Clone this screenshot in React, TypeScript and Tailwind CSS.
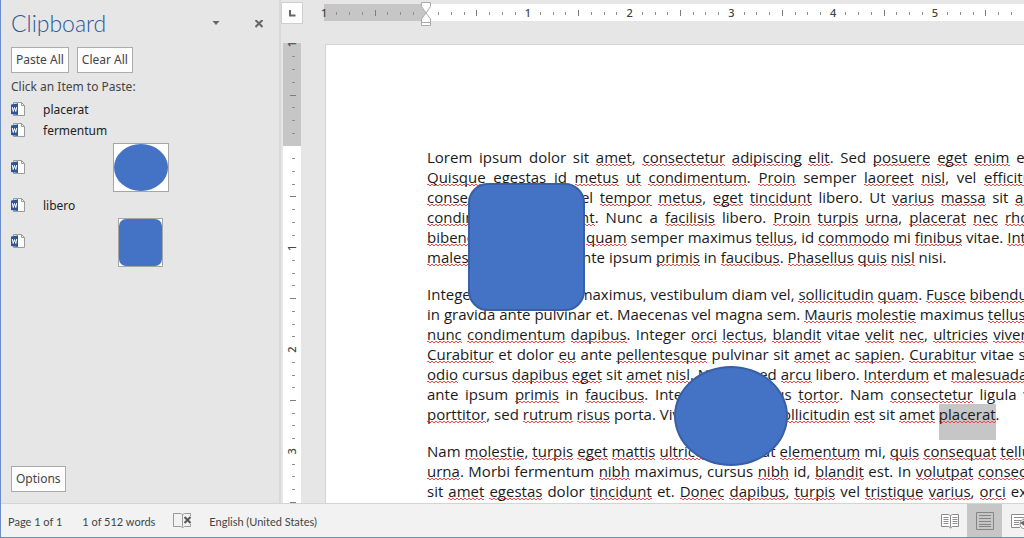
import { Fragment } from 'react';

type Line = { text: string; width?: string };

// words between underscores are flagged by the spell checker, * marks the selection
const paragraphs: Line[][] = [
  [
    { text: 'Lorem ipsum dolor sit _amet_, _consectetur_ _adipiscing_ _elit_. Sed _posuere_ _eget_ _enim_ et', width: 'w-[603px]' },
    { text: '_Quisque_ _egestas_ id _metus_ _ut_ _condimentum_. _Proin_ semper _laoreet_ _nisl_, vel _efficitur_', width: 'w-[611px]' },
    { text: '_consectetur_ nisl. Ut vel _tempor_ _metus_, _eget_ _tincidunt_ libero. Ut _varius_ _massa_ sit _amet_', width: 'w-[624px]' },
    { text: '_condimentum_ _tincidunt_. Nunc a _facilisis_ libero. _Proin_ _turpis_ _urna_, _placerat_ _nec_ _rhoncus_', width: 'w-[635px]' },
    { text: '_bibendum_. Aliquam et _quam_ semper maximus _tellus_, id _commodo_ mi _finibus_ vitae. _Interdum_', width: 'w-[642px]' },
    { text: '_malesuada_ fames ac ante ipsum _primis_ in _faucibus_. _Phasellus_ _quis_ _nisl_ nisi.' },
  ],
  [
    { text: 'Integer at ipsum quis maximus, vestibulum diam vel, _sollicitudin_ _quam_. _Fusce_ _bibendum_', width: 'w-[608px]' },
    { text: 'in gravida ante pulvinar et. Maecenas vel magna sem. _Mauris_ _molestie_ maximus _tellus_,', width: 'w-[592px]' },
    { text: '_nunc_ _condimentum_ _dapibus_. Integer _orci_ _lectus_, _blandit_ vitae _velit_ _nec_, _ultricies_ _viverra_', width: 'w-[614px]' },
    { text: '_Curabitur_ et dolor _eu_ ante _pellentesque_ pulvinar sit _amet_ ac _sapien_. _Curabitur_ vitae sem', width: 'w-[621px]' },
    { text: '_odio_ cursus _dapibus_ _eget_ sit _amet_ _nisl_. Nullam sed _arcu_ libero. _Interdum_ et _malesuada_', width: 'w-[596px]' },
    { text: 'ante ipsum _primis_ in _faucibus_. Integer non cursus _tortor_. Nam _consectetur_ ligula vel', width: 'w-[616px]' },
    { text: '_porttitor_, sed _rutrum_ _risus_ porta. Vivamus mauris _sollicitudin_ _est_ sit _amet_ *placerat*.' },
  ],
  [
    { text: 'Nam _molestie_, _turpis_ _eget_ _mattis_ _ultrices_, sed erat _elementum_ mi, _quis_ _consequat_ _tellus_', width: 'w-[611px]' },
    { text: '_urna_. Morbi fermentum _nibh_ maximus, cursus _nibh_ id, _blandit_ est. In _volutpat_ _consequat_', width: 'w-[624px]' },
    { text: 'sit _amet_ _egestas_ dolor _tincidunt_ et. _Donec_ _dapibus_, _turpis_ vel _tristique_ _varius_, _orci_ ex', width: 'w-[600px]' },
  ],
];

const squiggle =
  'bg-[linear-gradient(90deg,#f24a4a_50%,transparent_50%),linear-gradient(90deg,#f24a4a_50%,transparent_50%)] bg-[length:4px_1px] bg-[position:0px_17px,2px_18px] bg-repeat-x';

function TextLine({ text, width }: Line) {
  return (
    <span className={`block h-5 whitespace-nowrap ${width ? `${width} [text-align-last:justify]` : ''}`}>
      {text.split(/(_[^_]+_|\*[^*]+\*)/).map((part, i) => {
        if (part.startsWith('_')) {
          return <span key={i} className={squiggle}>{part.slice(1, -1)}</span>;
        }
        if (part.startsWith('*')) {
          return <span key={i} className={`bg-[#c6c6c6] pb-4 ${squiggle}`}>{part.slice(1, -1)}</span>;
        }
        return <Fragment key={i}>{part}</Fragment>;
      })}
    </span>
  );
}

const INCH = 101.8;

function HorizontalRuler() {
  const marks = Array.from({ length: 55 }, (_, i) => i - 8);
  return (
    <svg className="block h-7 w-full overflow-hidden" aria-hidden="true">
      <rect x="7" y="4" width="100%" height="17" fill="#fff" />
      <rect x="7" y="4" width="102" height="17" fill="#c6c6c6" />
      {marks.map((m) => {
        const x = 109 + (m * INCH) / 8;
        if (m === 0) return null;
        if (m % 8 === 0) {
          return (
            <text key={m} x={x} y="17" textAnchor="middle" className="fill-[#444] font-['Noto_Sans',sans-serif] text-[11px] font-medium">
              {Math.abs(m / 8)}
            </text>
          );
        }
        const half = m % 4 === 0;
        return <rect key={m} x={Math.floor(x)} y={half ? 10 : 12} width="1" height={half ? 6 : 3} fill={half ? '#7d7d7d' : '#8f8f8f'} />;
      })}
      <path d="M104.500 2.500h9v4l-4.500 6.500 4.500 6v6.500h-9v-6.500l4.500-6-4.500-6.500z" fill="#fff" stroke="#ababab" />
      <path d="M104.500 22.500h9" stroke="#ababab" />
    </svg>
  );
}

function VerticalRuler() {
  const marks = Array.from({ length: 37 }, (_, i) => i - 8);
  return (
    <svg className="block min-h-0 w-[18px] flex-1 overflow-hidden" aria-hidden="true">
      <rect y="3" width="18" height="100%" fill="#fff" />
      <rect y="3" width="18" height="103" fill="#c6c6c6" />
      {marks.map((m) => {
        const y = 106 + (m * INCH) / 8;
        if (m === 0) return null;
        if (m % 8 === 0) {
          return (
            <text key={m} transform={`translate(13 ${y}) rotate(-90)`} textAnchor="middle" className="fill-[#444] font-['Noto_Sans',sans-serif] text-[11px] font-medium">
              {Math.abs(m / 8)}
            </text>
          );
        }
        const half = m % 4 === 0;
        return <rect key={m} x={half ? 7 : 9} y={Math.floor(y)} width={half ? 6 : 3} height="1" fill={half ? '#7d7d7d' : '#8f8f8f'} />;
      })}
    </svg>
  );
}

function WordIcon() {
  return (
    <svg className="h-4 w-4 shrink-0" viewBox="0 0 16 16" aria-hidden="true">
      <path d="M2.500 3V.5h4M2.500 12v1.500h4" fill="none" stroke="#9a9a9a" />
      <path d="M6.500 .5h4l3 3v10h-7z" fill="#fff" stroke="#9a9a9a" />
      <path d="M10.500 .5v3h3" fill="none" stroke="#9a9a9a" />
      <path d="M0 2.500l7-1v11.500l-7-1z" fill="#2b579a" />
      <path d="M1.300 5l.9 4.500 1.300-4 1.300 4L5.700 5" fill="none" stroke="#fff" strokeWidth="1" />
    </svg>
  );
}

function PaneButton({ children }: { children: string }) {
  return (
    <button className="h-[26px] border border-[#ababab] bg-[#fdfdfd] px-1 text-xs text-[#444]">{children}</button>
  );
}

function ClipboardPane() {
  return (
    <aside className="flex w-[280px] shrink-0 flex-col border-r-2 border-[#d9d9d9] pl-[10px] font-['Noto_Sans',sans-serif] text-xs text-[#444]">
      <div className="flex h-[47px] items-center">
        <h1 className="flex-1 font-[Lato,sans-serif] text-[23px] font-light text-[#2b579a]">Clipboard</h1>
        <button aria-label="Pane options" className="mr-[35px]">
          <svg className="h-2 w-2" viewBox="0 0 8 8"><path d="M.5 1h7l-3.500 4z" fill="#666" /></svg>
        </button>
        <button aria-label="Close" className="mr-4">
          <svg className="h-2 w-2" viewBox="0 0 8 8"><path d="M.5 0l7 7M7.500 0l-7 7" stroke="#666" strokeWidth="2" /></svg>
        </button>
      </div>
      <div className="flex gap-2">
        <PaneButton>Paste All</PaneButton>
        <PaneButton>Clear All</PaneButton>
      </div>
      <p className="mt-1 leading-5">Click an Item to Paste:</p>
      <ul className="mt-[2px] flex flex-col text-[#222]">
        <li className="flex h-[21px] items-center gap-4"><WordIcon />placerat</li>
        <li className="flex h-[22px] items-center gap-4"><WordIcon />fermentum</li>
        <li className="flex h-[51px] items-center">
          <WordIcon />
          <svg className="ml-[86px] h-[49px] w-14" viewBox="0 0 56 49" role="img" aria-label="Ellipse">
            <rect x=".5" y=".5" width="55" height="48" fill="#fff" stroke="#a6a6a6" />
            <ellipse cx="28" cy="24.500" rx="27" ry="23.500" fill="#4472c4" />
          </svg>
        </li>
        <li className="flex h-[25px] items-center gap-4"><WordIcon />libero</li>
        <li className="flex h-12 items-center">
          <WordIcon />
          <svg className="ml-[91px] h-[49px] w-[45px]" viewBox="0 0 45 49" role="img" aria-label="Rounded rectangle">
            <rect x=".5" y=".5" width="44" height="48" fill="#fff" stroke="#a6a6a6" />
            <rect x="1" y="1" width="43" height="47" rx="7" fill="#4472c4" />
          </svg>
        </li>
      </ul>
      <div className="mt-auto mb-[11px]">
        <PaneButton>Options</PaneButton>
      </div>
    </aside>
  );
}

function StatusBar() {
  return (
    <footer className="flex h-[34px] shrink-0 items-center border-t border-[#d4d4d4] bg-[#f2f2f2] pl-[7px] font-[Lato,'Noto_Sans',sans-serif] text-[11px] leading-4 text-[#444]">
      <span className="pt-[2px]">Page 1 of 1</span>
      <span className="ml-5 pt-[2px]">1 of 512 words</span>
      <button aria-label="Proofing errors" className="ml-[18px]">
        <svg className="h-4 w-5" viewBox="0 0 20 16" fill="none">
          <path d="M.5 .5h7l2 1 2-1h6V3M.5 .5v13h7l2 1 2-1h6V11M9.500 1.500v12" stroke="#9a9a9a" />
          <path d="M11.500 4l6 6M17.500 4l-6 6" stroke="#555" strokeWidth="2" />
        </svg>
      </button>
      <span className="ml-4 flex-1 pt-[2px]">English (United States)</span>
      <div className="flex h-full w-[89px] shrink-0 overflow-hidden">
        <button aria-label="Read Mode" className="flex w-8 shrink-0 items-center pl-[6px]">
          <svg className="h-4 w-5" viewBox="0 0 20 16" fill="none" stroke="#8c8c8c">
            <path d="M.5 1.500h7l2 1 2-1h6v12h-6l-2 1.500-2-1.500h-7z" fill="#fff" />
            <path d="M9.500 2.500v12M2.500 4.500h5M2.500 6.500h5M2.500 8.500h5M2.500 10.500h5M11.500 4.500h5M11.500 6.500h5M11.500 8.500h5M11.500 10.500h5" />
          </svg>
        </button>
        <button aria-label="Print Layout" className="flex w-[35px] shrink-0 items-center justify-center bg-[#c6c6c6]">
          <svg className="h-[18px] w-[18px]" viewBox="0 0 18 18" fill="none" stroke="#858585">
            <path d="M.5.500h17v17h-17zM3 3.500h12M3 6.500h12M3 9.500h12M3 12.500h12M3 14.500h12" />
          </svg>
        </button>
        <button aria-label="Web Layout" className="flex w-10 shrink-0 items-center pl-[9px]">
          <svg className="h-4 w-5 shrink-0" viewBox="0 0 20 16" fill="none" stroke="#8c8c8c">
            <path d="M9 14.500H.5v-13h16V5" fill="#fff" />
            <path d="M3 4.500h11M3 7.500h7M3 9.500h5M3 11.500h5" />
            <circle cx="14" cy="11" r="5" fill="#fff" />
            <path d="M9 10l5-3 4 2-3 5z" fill="#666" stroke="none" />
          </svg>
        </button>
      </div>
    </footer>
  );
}

export default function App() {
  return (
    <div className="flex h-screen flex-col overflow-hidden border-b border-l border-[#6c8cc7] bg-[#e6e6e6]">
      <div className="flex min-h-0 flex-1">
        <ClipboardPane />
        <div className="flex w-9 shrink-0 flex-col">
          <button aria-label="Left tab" className="mt-[2px] mb-4 flex h-[22px] w-[22px] items-center justify-center border border-[#cfcfcf] bg-[#fdfdfd]">
            <svg className="h-2 w-2" viewBox="0 0 8 8"><path d="M2 1v5.500h5.500" fill="none" stroke="#666" strokeWidth="2" /></svg>
          </button>
          <div className="flex min-h-0 flex-1 pl-[2px]">
            <VerticalRuler />
            <div className="w-4" />
          </div>
        </div>
        <main className="relative flex min-w-0 flex-1 flex-col">
          <HorizontalRuler />
          <div className="mt-4 ml-2 min-h-0 flex-1 overflow-hidden border-t border-l border-[#d4d4d4] bg-white pt-[102px] pl-[101px] font-['Open_Sans',sans-serif] text-[15px] leading-5 text-[#1a1a1a]">
            {paragraphs.map((lines, i) => (
              <p key={i} className="mb-[17px]">
                {lines.map((line) => (
                  <TextLine key={line.text} {...line} />
                ))}
              </p>
            ))}
          </div>
          <div className="absolute top-[183px] left-[151px] h-32 w-[117px] rounded-[20px] border-2 border-[#3860a6] bg-[#4472c4]" />
          <div className="absolute top-[366px] left-[357px] h-[100px] w-[114px] rounded-[50%] border-2 border-[#3860a6] bg-[#4472c4]" />
        </main>
      </div>
      <StatusBar />
    </div>
  );
}
